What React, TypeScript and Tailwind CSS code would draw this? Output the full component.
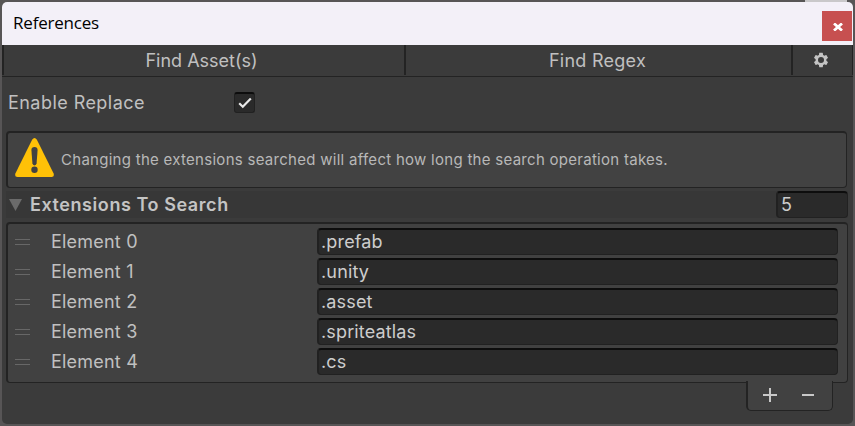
import React from "react";

const extensions = [".prefab", ".unity", ".asset", ".spriteatlas", ".cs"];

function Field({ value, className }: { value: string; className: string }) {
  return (
    <div
      className={`flex h-[27px] items-center rounded-[4px] border border-l-2 border-t-2 border-[#212121] border-t-[#0d0d0d] bg-[#2a2a2a] leading-none text-[#cdcdcd] ${className}`}
    >
      <span>{value}</span>
    </div>
  );
}

function TitleBar() {
  return (
    <header className="flex h-[43px] justify-between bg-[#f3f0f8]">
      <h1 className="pl-[11px] pt-[8px] font-['Open_Sans','Noto_Sans',sans-serif] text-[17px] leading-[26px] tracking-[-0.2px] text-black">
        References
      </h1>
      <button className="mr-px mt-[9px] flex h-[30px] w-[30px] items-center justify-center bg-[#c75050]">
        <svg width="10" height="8" viewBox="0 0 10 8" className="ml-px mt-px" stroke="#fff" strokeWidth="2.7">
          <path d="M1 .4 9 7.6M9 .4 1 7.6" />
        </svg>
      </button>
    </header>
  );
}

function Toolbar() {
  return (
    <nav className="flex h-8 border-b border-[#232323] pb-px text-[18px] text-[#c0c0c0]">
      <button className="w-[402px] border-l-2 border-[#232323] pr-[5px] pt-[2px] leading-[28px] tracking-[0px]">
        Find Asset(s)
      </button>
      <button className="w-[387px] border-l-2 border-[#232323] pr-[2px] pt-[2px] leading-[28px] tracking-[0.27px]">
        Find Regex
      </button>
      <button className="flex flex-1 items-center justify-center border-l-2 border-r border-[#232323] pr-[3px]">
        <svg width="18" height="18" viewBox="0 0 24 24" fill="#c4c4c4" className="overflow-visible">
          <path d="M19.14 12.94c.04-.3.06-.61.06-.94s-.02-.64-.07-.94l2.03-1.58a.49.49 0 0 0 .12-.61l-1.92-3.32a.488.488 0 0 0-.59-.22l-2.39.96a7 7 0 0 0-1.62-.94l-.36-2.54a.484.484 0 0 0-.48-.41h-3.84c-.24 0-.43.17-.47.41l-.36 2.54c-.59.24-1.13.57-1.62.94l-2.39-.96a.49.49 0 0 0-.59.22L2.74 8.87c-.12.21-.08.47.12.61l2.03 1.58c-.05.3-.09.63-.09.94s.02.64.07.94l-2.03 1.58a.49.49 0 0 0-.12.61l1.92 3.32c.12.22.37.29.59.22l2.39-.96c.5.38 1.03.7 1.62.94l.36 2.54c.05.24.24.41.48.41h3.84c.24 0 .44-.17.47-.41l.36-2.54a7 7 0 0 0 1.62-.94l2.39.96c.22.08.47 0 .59-.22l1.92-3.32a.49.49 0 0 0-.12-.61zM12 16a4 4 0 1 1 0-8 4 4 0 0 1 0 8" />
        </svg>
      </button>
    </nav>
  );
}

function ReplaceToggle() {
  return (
    <div className="flex h-[54px] items-start pl-[6px] pt-[15px]">
      <span className="w-[226px] text-[18px] leading-[22px] tracking-[0.45px] text-[#c0c0c0]">Enable Replace</span>
      <span className="flex h-[21px] w-[21px] items-center justify-center rounded-[3px] border border-t-2 border-[#212121] border-t-[#0d0d0d] bg-[#2a2a2a]">
        <svg width="14" height="12" viewBox="0 0 14 12" fill="none" stroke="#e8e8e8" strokeWidth="2.2">
          <path d="M1.2 6.2 4.8 9.8 12.8 1.4" />
        </svg>
      </span>
    </div>
  );
}

function HelpBox() {
  return (
    <div className="ml-1 flex h-[57px] w-[841px] items-center rounded-[4px] border border-l-2 border-t-2 border-[#232323] bg-[#424242]">
      <svg width="39" height="39" viewBox="0 0 39 39" className="-mt-[5px] ml-[7px]">
        <path
          d="M17.1 1.8Q19.5-1.8 21.9 1.8L38.5 35.3Q39.8 38.6 36.5 39H2.5Q-.8 38.6.5 35.3Z"
          fill="#ffc107"
        />
        <path d="M16.4 12Q16.4 9 19.5 9T22.6 12L21.6 25.3Q21.3 27.4 19.5 27.4T17.4 25.3Z" fill="#424242" />
        <circle cx="19.5" cy="31.8" r="3.2" fill="#424242" />
      </svg>
      <p className="ml-[7px] text-[15px] leading-5 tracking-[0.28px] text-[#b8b8b8]">
        Changing the extensions searched will affect how long the search operation takes.
      </p>
    </div>
  );
}

function ExtensionList() {
  return (
    <section className="ml-1 mt-[3px] w-[842px]">
      <div className="flex h-[27px] items-center bg-[#373737]">
        <svg width="13" height="12" viewBox="0 0 13 12" className="ml-[3px] shrink-0">
          <path d="M0 0h13L6.5 12Z" fill="#6b6b6b" />
        </svg>
        <h2 className="ml-[8px] flex-1 text-[18px] font-semibold leading-[27px] tracking-[0.57px] text-[#c4c4c4]">
          Extensions To Search
        </h2>
        <Field value="5" className="w-[72px] pl-[3px] text-[18px]" />
      </div>
      <ul className="mt-1 flex h-[161px] flex-col gap-[3px] rounded-[4px] border border-l-2 border-t-2 border-[#232323] bg-[#414141] pt-1 text-[18px]">
        {extensions.map((ext, i) => (
          <li key={ext} className="flex h-[27px] shrink-0 items-center">
            <span className="ml-[7px] mt-px h-[6px] w-[15px] shrink-0 border-y border-[#676767]" />
            <span className="ml-[21px] w-[266px] shrink-0 text-[18px] leading-[27px] tracking-[0.2px] text-[#c0c0c0]">
              Element {i}
            </span>
            <Field value={ext} className="w-[521px] pl-[2px] tracking-[0.15px]" />
          </li>
        ))}
      </ul>
      <div className="relative -mt-[2px] ml-[740px] flex h-[30px] w-[87px] rounded-b-[5px] border-b border-l-2 border-r border-[#232323] bg-[#414141]">
        <button className="ml-[15px] mt-[7px] h-[14px] w-[14px]">
          <svg width="14" height="14" viewBox="0 0 14 14" stroke="#c8c8c8" strokeWidth="2">
            <path d="M0 7h14M7 0v14" />
          </svg>
        </button>
        <button className="ml-[25px] mt-[7px] h-[14px] w-[12px]">
          <svg width="12" height="14" viewBox="0 0 12 14" stroke="#c8c8c8" strokeWidth="2">
            <path d="M0 7h12" />
          </svg>
        </button>
      </div>
    </section>
  );
}

export default function App() {
  return (
    <div className="relative h-[426px] w-[855px] overflow-hidden bg-[#575556] p-[2px] font-['Inter',sans-serif]">
      <span className="absolute left-[805px] top-0 h-[2px] w-[42px] bg-[#c9c8ca]" />
      <main className="relative h-[422px] w-[851px] overflow-hidden rounded-[5px] bg-[#3b3b3b]">
        <TitleBar />
        <Toolbar />
        <ReplaceToggle />
        <HelpBox />
        <ExtensionList />
      </main>
    </div>
  );
}
